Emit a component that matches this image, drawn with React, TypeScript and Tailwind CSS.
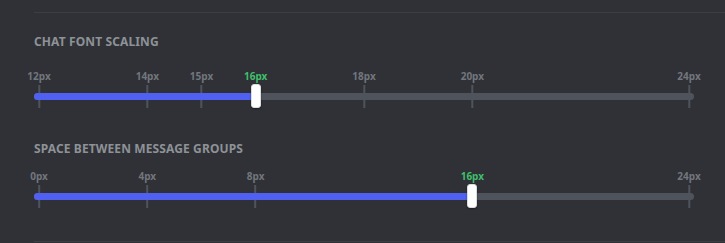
const font = { fontFamily: '"Noto Sans", "Open Sans", sans-serif' };

type Mark = { label: string; value: number };

function Slider({
	marks,
	min,
	max,
	value,
}: {
	marks: Mark[];
	min: number;
	max: number;
	value: number;
}) {
	const pct = (v: number) => ((v - min) / (max - min)) * 100;
	return (
		<div className="relative h-[44px] w-[660px]">
			{/* labels + ticks, placed by value */}
			<div className="absolute inset-y-0 left-[5px] right-[5px]">
				{marks.map((m) => (
					<div
						key={m.label}
						className="absolute top-0 flex h-full -translate-x-1/2 flex-col items-center"
						style={{ left: `${pct(m.value)}%` }}
					>
						<span
							className={`text-[10px] leading-[12px] font-bold ${
								m.value === value ? "text-[#3fbf6c]" : "text-[#72767d]"
							}`}
						>
							{m.label}
						</span>
						<div className="mt-[3px] h-[23px] w-[2px] bg-[#4f545c]" />
					</div>
				))}
			</div>
			{/* track */}
			<div className="absolute inset-x-0 top-[23px] h-[7px] rounded-full bg-[#4f545c]">
				<div
					className="h-full rounded-l-full bg-[#5060f0]"
					style={{ width: `calc(5px + (100% - 10px) * ${pct(value) / 100})` }}
				/>
			</div>
			{/* grabber */}
			<div className="absolute inset-x-[5px] top-[14px] h-[24px]">
				<div
					className="absolute top-0 h-[24px] w-[10px] -translate-x-1/2 rounded-[3px] border border-[#dcddde] bg-white shadow-[0_1px_2px_rgba(0,0,0,0.4)]"
					style={{ left: `${pct(value)}%` }}
				/>
			</div>
		</div>
	);
}

function Setting({ title, children }: { title: string; children: React.ReactNode }) {
	return (
		<section className="flex flex-col gap-[14px]">
			<h5 className="text-[12px] leading-[14px] font-bold uppercase tracking-[0.01em] text-[#8e9297]">
				{title}
			</h5>
			{children}
		</section>
	);
}

export default function App() {
	return (
		<div className="h-[243px] w-[725px] bg-[#2f3136] pl-[34px] pt-[12px]" style={font}>
			<div className="flex flex-col gap-[28px]">
				<div className="flex flex-col gap-[22px]">
					<div className="h-px bg-[#3b3e43]" />
					<div className="[&>section]:gap-[21px]">
						<Setting title="Chat Font Scaling">
							<Slider
								min={12}
								max={24}
								value={16}
								marks={[
									{ label: "12px", value: 12 },
									{ label: "14px", value: 14 },
									{ label: "15px", value: 15 },
									{ label: "16px", value: 16 },
									{ label: "18px", value: 18 },
									{ label: "20px", value: 20 },
									{ label: "24px", value: 24 },
								]}
							/>
						</Setting>
					</div>
				</div>
				<div className="flex flex-col gap-[27px]">
					<Setting title="Space Between Message Groups">
						<Slider
							min={0}
							max={24}
							value={16}
							marks={[
								{ label: "0px", value: 0 },
								{ label: "4px", value: 4 },
								{ label: "8px", value: 8 },
								{ label: "16px", value: 16 },
								{ label: "24px", value: 24 },
							]}
						/>
					</Setting>
					<div className="h-px bg-[#3b3e43]" />
				</div>
			</div>
		</div>
	);
}
